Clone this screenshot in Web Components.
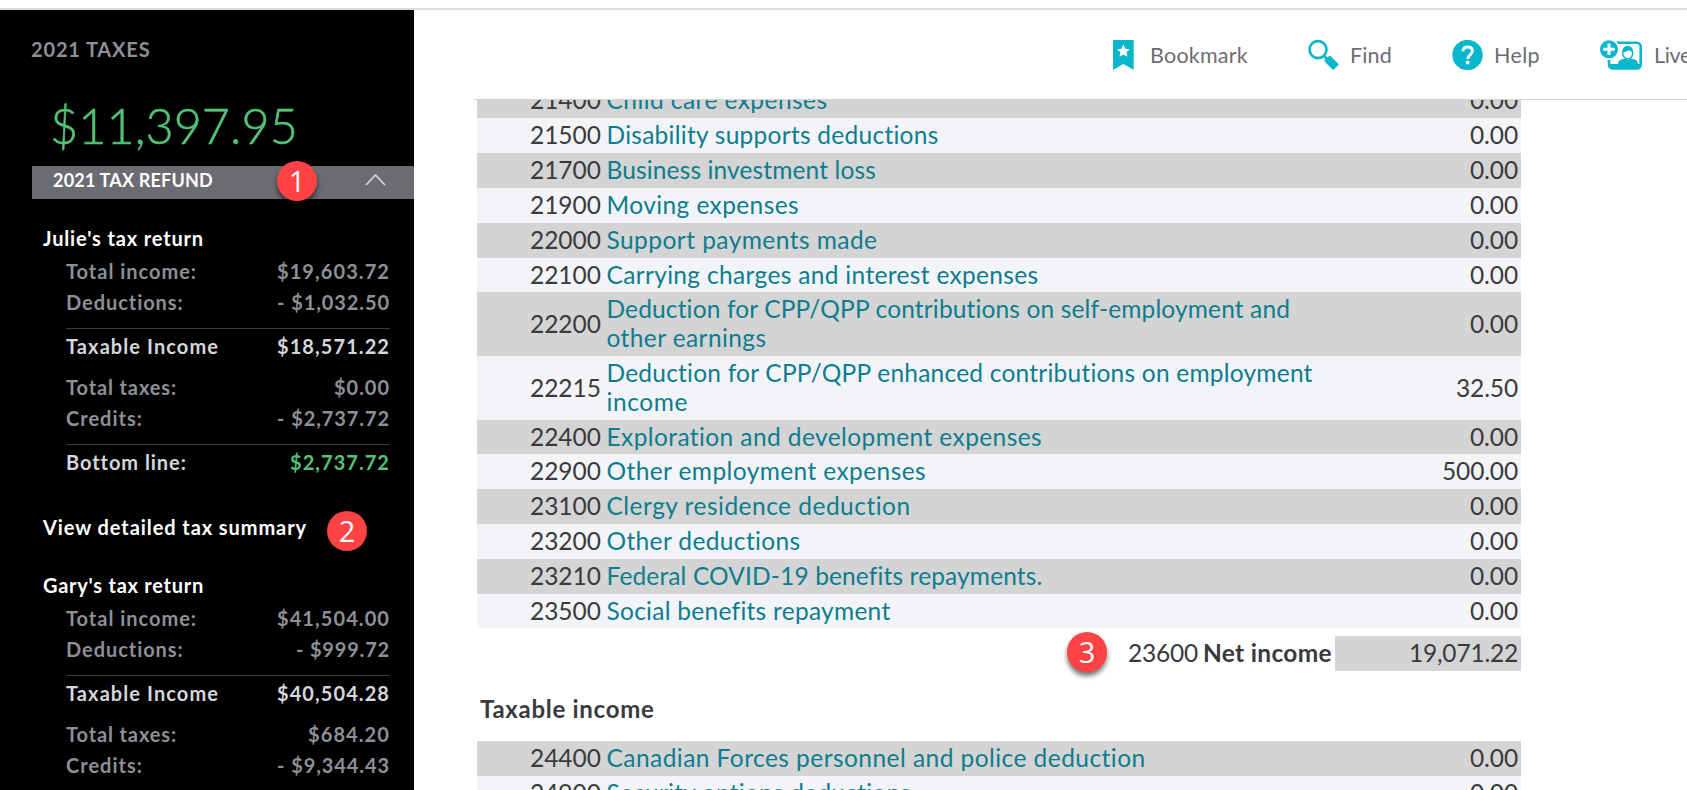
<!DOCTYPE html>
<html lang="en">
<head>
<meta charset="utf-8">
<title>2021 Taxes</title>
<style>
     html, body {
          margin: 0;
          height: 100%;
          overflow: hidden;
          background: #fff;
     }
</style>
</head>
<body>
<tax-app></tax-app>

<script>
"use strict";

function makeTemplate(html){
     const template = document.createElement('template');
     template.innerHTML = html;
     return template;
}

class BaseElement extends HTMLElement {
     constructor(){
          super();
          this.attachShadow({ mode: 'open' });
          this.shadowRoot.appendChild( this.constructor.template.content.cloneNode(true) );
     }
     $(selector){
          return this.shadowRoot.querySelector(selector);
     }
}

// one line of text, tracked so that it takes the given width
class FitText extends BaseElement {
     static template = makeTemplate(`
          <style>
               :host { display: block; white-space: nowrap; }
               span { display: inline-block; white-space: pre; }
          </style>
          <span><slot></slot></span>
     `);

     connectedCallback(){
          const width = parseFloat(this.getAttribute('width'));
          const natural = this.$('span').getBoundingClientRect().width;
          const spacing = (width - natural) / this.textContent.length;
          this.style.letterSpacing = spacing.toFixed(3) + 'px';
     }
}

class StepBadge extends BaseElement {
     static template = makeTemplate(`
          <style>
               :host {
                    display: flex;
                    flex: none;
                    align-items: center;
                    justify-content: center;
                    width: 40px;
                    height: 40px;
                    border-radius: 50%;
                    background: #ff4243;
                    color: #fff;
                    font: 29px/40px "Open Sans", "Noto Sans", sans-serif;
                    box-shadow: 0 4px 5px rgba(0, 0, 0, 0.55);
               }
          </style>
          <slot></slot>
     `);
}

class SummaryRow extends BaseElement {
     static template = makeTemplate(`
          <style>
               :host {
                    display: flex;
                    justify-content: space-between;
                    height: 31px;
                    line-height: 31px;
                    color: #8d9096;
               }
               :host([total]) {
                    margin: 10px 0;
                    padding-top: 2px;
                    border-top: 1px solid #393a3d;
                    color: #d4d7dc;
               }
               :host([refund]) slot[name="amount"] { color: #53c278; }
          </style>
          <slot></slot>
          <slot name="amount"></slot>
     `);
}

class TaxReturn extends BaseElement {
     static template = makeTemplate(`
          <style>
               :host { display: block; }
               .name {
                    height: 33px;
                    padding-left: 43px;
                    line-height: 31px;
                    color: #fff;
               }
               .rows { margin: 0 24px 0 66px; }
          </style>
          <div class="name"><slot name="name"></slot></div>
          <div class="rows"><slot></slot></div>
     `);
}

class TaxSidebar extends BaseElement {
     static template = makeTemplate(`
          <style>
               :host {
                    display: block;
                    flex: none;
                    width: 414px;
                    overflow: hidden;
                    background: #000;
                    font-size: 20px;
                    font-weight: 700;
               }
               .year {
                    padding: 24px 0 0 31px;
                    line-height: 31px;
                    color: #8d9096;
               }
               .amount {
                    padding-left: 50px;
                    height: 101px;
                    font-size: 48.5px;
                    font-weight: 300;
                    line-height: 120px;
                    color: #53c278;
                    -webkit-text-stroke: 0.6px #53c278;
               }
               .bar {
                    position: relative;
                    display: flex;
                    justify-content: space-between;
                    align-items: center;
                    height: 33px;
                    margin-left: 32px;
                    padding: 0 28px 0 21px;
                    background: #6b6c72;
                    color: #fff;
                    font-size: 18px;
                    font-weight: 700;
                    line-height: 29px;
               }
               .bar fit-text { padding-bottom: 4px; }
               .bar svg { padding-bottom: 5px; }
               .bar step-badge {
                    position: absolute;
                    left: 245px;
                    top: -5px;
               }
               tax-return { margin-top: 24px; }
               .details {
                    display: flex;
                    align-items: flex-start;
                    gap: 20px;
                    height: 31px;
                    margin: 34px 0 27px;
                    padding-left: 43px;
                    line-height: 31px;
                    color: #fff;
               }
               .details + tax-return { margin-top: 0; }
               .details step-badge { margin-top: -1px; }
          </style>
          <div class="year"><fit-text width="119.500">2021 TAXES</fit-text></div>
          <div class="amount"><fit-text width="248">$11,397.95</fit-text></div>
          <div class="bar">
               <fit-text width="160">2021 TAX REFUND</fit-text>
               <svg width="21" height="14" viewBox="0 0 21 14" fill="none" stroke="#d4d7dc" stroke-width="1.8"><path d="M1 12 10.500 2 20 12"/></svg>
               <step-badge>1</step-badge>
          </div>
          <tax-return>
               <fit-text slot="name" width="161">Julie's tax return</fit-text>
               <summary-row><fit-text width="131">Total income:</fit-text><fit-text slot="amount" width="113">$19,603.72</fit-text></summary-row>
               <summary-row><fit-text width="118">Deductions:</fit-text><fit-text slot="amount" width="113">- $1,032.50</fit-text></summary-row>
               <summary-row total><fit-text width="153">Taxable Income</fit-text><fit-text slot="amount" width="113">$18,571.22</fit-text></summary-row>
               <summary-row><fit-text width="111">Total taxes:</fit-text><fit-text slot="amount" width="56">$0.00</fit-text></summary-row>
               <summary-row><fit-text width="77">Credits:</fit-text><fit-text slot="amount" width="113">- $2,737.72</fit-text></summary-row>
               <summary-row total refund><fit-text width="120">Bottom line:</fit-text><fit-text slot="amount" width="100">$2,737.72</fit-text></summary-row>
          </tax-return>
          <div class="details"><fit-text width="264">View detailed tax summary</fit-text><step-badge>2</step-badge></div>
          <tax-return>
               <fit-text slot="name" width="161">Gary's tax return</fit-text>
               <summary-row><fit-text width="131">Total income:</fit-text><fit-text slot="amount" width="113">$41,504.00</fit-text></summary-row>
               <summary-row><fit-text width="118">Deductions:</fit-text><fit-text slot="amount" width="94">- $999.72</fit-text></summary-row>
               <summary-row total><fit-text width="153">Taxable Income</fit-text><fit-text slot="amount" width="113">$40,504.28</fit-text></summary-row>
               <summary-row><fit-text width="111">Total taxes:</fit-text><fit-text slot="amount" width="82">$684.20</fit-text></summary-row>
               <summary-row><fit-text width="77">Credits:</fit-text><fit-text slot="amount" width="113">- $9,344.43</fit-text></summary-row>
          </tax-return>
     `);
}

class ToolItem extends BaseElement {
     static template = makeTemplate(`
          <style>
               :host {
                    display: flex;
                    flex: none;
                    align-items: center;
                    line-height: 30px;
                    color: #6b6c72;
               }
               ::slotted(svg) { display: block; flex: none; }
          </style>
          <slot name="icon"></slot>
          <slot></slot>
     `);
}

class ToolBar extends BaseElement {
     static template = makeTemplate(`
          <style>
               :host {
                    display: flex;
                    box-sizing: border-box;
                    height: 90px;
                    margin-left: 60px;
                    padding: 30px 0 0 639px;
                    overflow: hidden;
                    border-bottom: 1px solid #d4d4d4;
                    font-size: 21.5px;
               }
               tool-item { height: 30px; }
               .bookmark { gap: 16px; width: 195px; }
               .find { gap: 11px; width: 144px; }
               .help { gap: 11px; width: 148px; }
               .live { gap: 12px; }
          </style>
          <tool-item class="bookmark">
               <svg slot="icon" width="21" height="30" viewBox="0 0 21 30"><path fill="#08b7cb" d="M0 0h20.700v30L10.400 24 0 30z"/><path fill="#fff" d="m10.400 4.500 1.900 4.200 4.500.5-3.400 3 1 4.500-4-2.300-4 2.300 1-4.500-3.400-3 4.500-.5z"/></svg>
               <fit-text width="98">Bookmark</fit-text>
          </tool-item>
          <tool-item class="find">
               <svg slot="icon" width="31" height="30" viewBox="0 0 31 30" fill="none" stroke="#08b7cb"><circle cx="10" cy="9.600" r="8.500" stroke-width="2.700"/><path stroke-width="3" d="m15.500 15.500 4 4"/><path stroke-width="2" stroke-linejoin="round" fill="#08b7cb" d="m17.500 21 4.300-4.300 7.700 7.800-4.300 4.300z"/></svg>
               <fit-text width="42">Find</fit-text>
          </tool-item>
          <tool-item class="help">
               <svg slot="icon" width="31" height="30" viewBox="0 0 31 30"><circle cx="15.500" cy="15" r="15.200" fill="#08b7cb"/><path d="M10.800 11.200c.4-2.600 2.100-4.200 4.800-4.200 3 0 4.900 1.600 4.900 4 0 3.500-4.800 3.800-4.800 8" fill="none" stroke="#fff" stroke-width="2.800"/><circle cx="15.700" cy="22.500" r="1.900" fill="#fff"/></svg>
               <fit-text width="46">Help</fit-text>
          </tool-item>
          <tool-item class="live">
               <svg slot="icon" width="42" height="30" viewBox="0 0 42 30"><rect x="9" y="2.700" width="31.700" height="25.800" rx="4" fill="#fff" stroke="#08b7cb" stroke-width="2.600"/><path fill="#08b7cb" d="M9 24h9c0-3 2-4.500 7-5.500l3 1.500 3-1.500c5 1 7 2.500 7 5.500h3v2a3 3 0 0 1-3 3H12a3 3 0 0 1-3-3z"/><ellipse cx="27.700" cy="13" rx="5" ry="6" fill="#fff" stroke="#08b7cb" stroke-width="1.500"/><path fill="#08b7cb" d="M22.500 12c0-4 2-6 5.200-6s5.200 2 5.200 6c-2 0-3-1-4-2-1 1.500-3.500 2-6.400 2z"/><circle cx="9" cy="9.300" r="10.600" fill="#fff"/><circle cx="9" cy="9.300" r="9" fill="#08b7cb"/><path d="M9 3.500v11.600M3.200 9.300h11.600" stroke="#fff" stroke-width="3"/></svg>
               <fit-text width="37">Live</fit-text>
          </tool-item>
     `);
}

class FormLine extends BaseElement {
     static template = makeTemplate(`
          <style>
               :host {
                    display: grid;
                    grid-template-columns: 124px 1fr auto;
                    column-gap: 5.5px;
                    align-items: center;
                    box-sizing: border-box;
                    height: 35px;
                    padding: 0 3px 2px 0;
                    background: #f3f4f8;
                    line-height: 29px;
               }
               :host([shade]) { background: #d4d4d4; }
               :host([short]) { height: 34px; }
               :host([tall]) { height: 64px; }
               .code { text-align: right; }
               .label {
                    display: flex;
                    flex-direction: column;
                    align-items: flex-start;
                    color: #0c7d8f;
               }
          </style>
          <div class="code"><fit-text width="69.500"></fit-text></div>
          <div class="label"><slot></slot></div>
          <div class="value"><slot name="value"></slot></div>
     `);

     constructor(){
          super();
          this.$('fit-text').textContent = this.getAttribute('code');
     }
}

class FormTable extends BaseElement {
     static template = makeTemplate(`
          <style>
               :host {
                    display: block;
                    width: 1044px;
                    margin-left: 63px;
                    overflow: hidden;
               }
          </style>
          <slot></slot>
     `);
}

// [code, shaded, size, value, value width, label lines as [text, width]]
const deductions = [
     ['21400', true, '', '0.00', 48, [['Child care expenses', 221]]],
     ['21500', false, '', '0.00', 48, [['Disability supports deductions', 332.5]]],
     ['21700', true, '', '0.00', 48, [['Business investment loss', 269.5]]],
     ['21900', false, '', '0.00', 48, [['Moving expenses', 192.5]]],
     ['22000', true, '', '0.00', 48, [['Support payments made', 271]]],
     ['22100', false, 'short', '0.00', 48, [['Carrying charges and interest expenses', 432]]],
     ['22200', true, 'tall', '0.00', 48, [['Deduction for CPP/QPP contributions on self-employment and', 684.5], ['other earnings', 160]]],
     ['22215', false, 'tall', '32.50', 62, [['Deduction for CPP/QPP enhanced contributions on employment', 707], ['income', 81.5]]],
     ['22400', true, 'short', '0.00', 48, [['Exploration and development expenses', 436]]],
     ['22900', false, '', '500.00', 76, [['Other employment expenses', 319.5]]],
     ['23100', true, '', '0.00', 48, [['Clergy residence deduction', 304.5]]],
     ['23200', false, '', '0.00', 48, [['Other deductions', 194.5]]],
     ['23210', true, '', '0.00', 48, [['Federal COVID-19 benefits repayments.', 435.5]]],
     ['23500', false, 'short', '0.00', 48, [['Social benefits repayment', 283.5]]]
];
const taxable = [
     ['24400', true, '', '0.00', 48, [['Canadian Forces personnel and police deduction', 539.5]]],
     ['24900', false, '', '0.00', 48, [['Security options deductions', 305.5]]]
];

function formLines(lines){
     return lines.map( ([code, shade, size, value, valueWidth, labels]) => `
          <form-line code="${code}" ${shade ? 'shade' : ''} ${size}>
               ${labels.map( ([text, width]) => `<fit-text width="${width}">${text}</fit-text>` ).join('')}
               <fit-text slot="value" width="${valueWidth}">${value}</fit-text>
          </form-line>` ).join('');
}

class FormPage extends BaseElement {
     static template = makeTemplate(`
          <style>
               :host {
                    display: block;
                    flex: 1;
                    min-height: 0;
                    overflow: hidden;
                    color: #393a3d;
                    font-size: 24.5px;
                    line-height: 29px;
               }
               form-table:first-of-type { margin-top: -17px; }
               .net {
                    display: flex;
                    justify-content: flex-end;
                    align-items: center;
                    width: 1044px;
                    height: 35px;
                    margin: 8px 0 0 63px;
               }
               .net > fit-text, .net b { padding-bottom: 2px; }
               .net step-badge { margin: -3px 21px 0 0; }
               .net b { margin: 0 3px 0 5px; font-weight: 700; }
               .net .total {
                    box-sizing: border-box;
                    width: 186px;
                    padding: 0 3px 2px 0;
                    background: #d4d4d4;
                    line-height: 33px;
                    text-align: right;
               }
               h2 {
                    height: 70px;
                    margin: 0 0 0 66px;
                    padding-top: 23px;
                    box-sizing: border-box;
                    font-size: 24px;
                    font-weight: 700;
                    line-height: 29px;
               }
          </style>
          <form-table>${formLines(deductions)}</form-table>
          <div class="net">
               <step-badge>3</step-badge>
               <fit-text width="70">23600</fit-text>
               <b><fit-text width="129">Net income</fit-text></b>
               <div class="total"><fit-text width="109">19,071.22</fit-text></div>
          </div>
          <h2><fit-text width="174.500">Taxable income</fit-text></h2>
          <form-table>${formLines(taxable)}</form-table>
     `);
}

class TaxApp extends BaseElement {
     static template = makeTemplate(`
          <style>
               :host {
                    display: flex;
                    box-sizing: border-box;
                    height: 790px;
                    padding-top: 8px;
                    flex-direction: column;
                    font-family: Lato, "Open Sans", sans-serif;
               }
               .columns {
                    display: flex;
                    flex: 1;
                    min-height: 0;
                    border-top: 2px solid #dcdcdc;
               }
               main {
                    display: flex;
                    flex-direction: column;
                    flex: 1;
                    min-width: 0;
               }
          </style>
          <div class="columns">
               <tax-sidebar></tax-sidebar>
               <main>
                    <tool-bar></tool-bar>
                    <form-page></form-page>
               </main>
          </div>
     `);
}

window.customElements.define('fit-text', FitText);
window.customElements.define('step-badge', StepBadge);
window.customElements.define('summary-row', SummaryRow);
window.customElements.define('tax-return', TaxReturn);
window.customElements.define('tax-sidebar', TaxSidebar);
window.customElements.define('tool-item', ToolItem);
window.customElements.define('tool-bar', ToolBar);
window.customElements.define('form-line', FormLine);
window.customElements.define('form-table', FormTable);
window.customElements.define('form-page', FormPage);
window.customElements.define('tax-app', TaxApp);
</script>
</body>
</html>
